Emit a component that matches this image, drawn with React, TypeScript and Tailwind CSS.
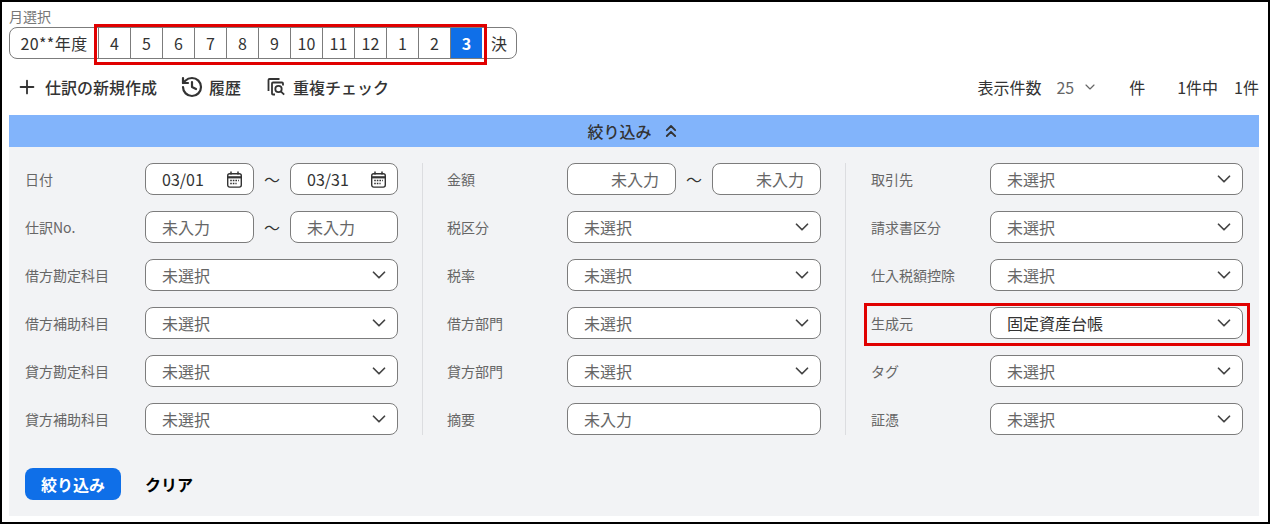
import { ChevronDown, ChevronsUp, History, Plus } from "lucide-react";

const months = [4, 5, 6, 7, 8, 9, 10, 11, 12, 1, 2, 3];

function CalendarIcon() {
  return (
    <svg viewBox="0 0 17 17" className="w-[17px] h-[17px] text-[#333]" fill="none" stroke="currentColor">
      <rect x="1.7" y="2.7" width="13.6" height="13.4" rx="2" strokeWidth="1.4" />
      <path d="M1.7 6.3h13.6" strokeWidth="2.2" />
      <path d="M5 0.6v3M12 0.6v3" strokeWidth="1.5" />
      <path d="M4.2 9.4h8.6M4.2 12.6h6.4" strokeWidth="1.5" strokeDasharray="1.6 1" />
    </svg>
  );
}

function DuplicateIcon() {
  return (
    <svg viewBox="0 0 20 20" className="w-5 h-5 text-[#333]" fill="none" stroke="currentColor" strokeWidth="1.8">
      <path d="M2.5 14V3A1 1 0 0 1 3.5 2h10" />
      <path d="M9 17.5H7a1 1 0 0 1-1-1V6.5a1 1 0 0 1 1-1h9a1 1 0 0 1 1 1V8.5" />
      <circle cx="12.5" cy="12" r="3.2" />
      <path d="M14.8 14.3l3.4 3.4" />
    </svg>
  );
}

function Box({ children, width, right }: { children: React.ReactNode; width: string; right?: boolean }) {
  return (
    <div
      className={`${width} h-8 shrink-0 flex items-center ${right ? "justify-end" : "justify-between"} pl-[16px] pr-[10px] bg-white border border-[#7c7c7c] rounded-lg text-base`}
    >
      {children}
    </div>
  );
}

function Select({ value = "未選択", width = "w-[253px]" }: { value?: string; width?: string }) {
  return (
    <div className={`${width} h-8 shrink-0 flex items-center justify-between pl-[16px] pr-[7px] bg-white border border-[#7c7c7c] rounded-lg text-base`}>
      <span className={value === "未選択" ? "text-[#666]" : "text-[#333]"}>{value}</span>
      <ChevronDown className="w-[22px] h-[22px] text-[#444]" strokeWidth={1.9} />
    </div>
  );
}

function TextBox({ text, right, width = "w-[109px]" }: { text: string; right?: boolean; width?: string }) {
  return (
    <Box width={width} right={right}>
      <span className={`text-[#666] ${right ? "pr-[6px]" : ""}`}>{text}</span>
    </Box>
  );
}

function DateBox({ text, width = "w-[109px]" }: { text: string; width?: string }) {
  return (
    <Box width={width}>
      <span className="text-[#333]">{text}</span>
      <CalendarIcon />
    </Box>
  );
}

function Tilde() {
  return <div className="w-9 text-center text-base text-[#333]">〜</div>;
}

function Row({ label, children, labelWidth = "w-[120px]" }: { label: string; children: React.ReactNode; labelWidth?: string }) {
  return (
    <div className="flex items-center h-8">
      <div className={`${labelWidth} shrink-0 text-sm text-[#666]`}>{label}</div>
      <div className="flex items-center">{children}</div>
    </div>
  );
}

export default function App() {
  return (
    <div
      className="relative w-[1270px] h-[524px] overflow-hidden bg-white border-2 border-black text-[#333]"
      style={{ fontFamily: '"Noto Sans CJK JP", "Noto Sans", sans-serif' }}
    >
      <div className="pl-[7px] pr-[9px]">
        {/* 月選択 */}
        <div className="text-sm text-[#777] leading-4 pt-[6px] h-[25px]">月選択</div>
        <div className="flex items-stretch w-[508px] h-8 bg-white border border-[#7c7c7c] rounded-lg text-base">
          <div className="w-[88px] flex items-center justify-center shrink-0 tracking-[0.4px]">20**年度</div>
          {months.map((m, i) => (
            <div
              key={i}
              className={`w-8 flex items-center justify-center shrink-0 border-l border-[#7c7c7c] ${
                m === 3 ? "bg-[#0f6fe8] text-white font-bold" : ""
              }`}
            >
              {m}
            </div>
          ))}
          <div className="flex-1 flex items-center justify-center">決</div>
        </div>

        {/* ツールバー */}
        <div className="flex items-center justify-between h-[29px] mt-[13px]">
          <div className="flex items-center font-medium text-base">
            <Plus className="w-[22px] h-[22px] ml-[7px] mr-[7px] text-[#333]" strokeWidth={2} />
            <span>仕訳の新規作成</span>
            <History className="w-6 h-6 ml-[23px] mr-[5px] text-[#333]" strokeWidth={2.2} />
            <span>履歴</span>
            <span className="ml-[25px] mr-[7px]">
              <DuplicateIcon />
            </span>
            <span>重複チェック</span>
          </div>
          <div className="flex items-center text-base text-[#333]">
            <span>表示件数</span>
            <span className="ml-[15px] text-[#666]">25</span>
            <ChevronDown className="w-4 h-4 ml-2 text-[#666]" strokeWidth={1.75} />
            <span className="ml-[31px]">件</span>
            <span className="ml-8">1件中</span>
            <span className="ml-4">1件</span>
          </div>
        </div>

        {/* 絞り込み */}
        <div className="mt-[14px] h-8 bg-[#82b4fb] flex items-center justify-center gap-[9px] font-medium text-base text-[#333]">
          <span>絞り込み</span>
          <ChevronsUp className="w-5 h-5" strokeWidth={2.25} />
        </div>

        <div className="h-[369px] bg-[#f2f3f5] pt-[16px] pl-[16px]">
          <div className="flex">
            <div className="flex flex-col gap-4 w-[373px] shrink-0">
              <Row label="日付">
                <DateBox text="03/01" />
                <Tilde />
                <DateBox text="03/31" width="w-[108px]" />
              </Row>
              <Row label="仕訳No.">
                <TextBox text="未入力" />
                <Tilde />
                <TextBox text="未入力" width="w-[108px]" />
              </Row>
              <Row label="借方勘定科目"><Select /></Row>
              <Row label="借方補助科目"><Select /></Row>
              <Row label="貸方勘定科目"><Select /></Row>
              <Row label="貸方補助科目"><Select /></Row>
            </div>
            <div className="w-px bg-[#dcdde0] mx-6 shrink-0" />
            <div className="flex flex-col gap-4 w-[374px] shrink-0">
              <Row label="金額">
                <TextBox text="未入力" right />
                <Tilde />
                <TextBox text="未入力" right />
              </Row>
              <Row label="税区分"><Select width="w-[254px]" /></Row>
              <Row label="税率"><Select width="w-[254px]" /></Row>
              <Row label="借方部門"><Select width="w-[254px]" /></Row>
              <Row label="貸方部門"><Select width="w-[254px]" /></Row>
              <Row label="摘要">
                <div className="w-[254px] h-8 flex items-center pl-[16px] bg-white border border-[#7c7c7c] rounded-lg text-base text-[#666]">
                  未入力
                </div>
              </Row>
            </div>
            <div className="w-px bg-[#dcdde0] ml-[24px] mr-[25px] shrink-0" />
            <div className="flex flex-col gap-4 shrink-0">
              <Row label="取引先" labelWidth="w-[119px]"><Select /></Row>
              <Row label="請求書区分" labelWidth="w-[119px]"><Select /></Row>
              <Row label="仕入税額控除" labelWidth="w-[119px]"><Select /></Row>
              <Row label="生成元" labelWidth="w-[119px]"><Select value="固定資産台帳" /></Row>
              <Row label="タグ" labelWidth="w-[119px]"><Select /></Row>
              <Row label="証憑" labelWidth="w-[119px]"><Select /></Row>
            </div>
          </div>

          <div className="flex items-center mt-[33px]">
            <div className="w-24 h-8 flex items-center justify-center bg-[#0f6fe8] text-white font-bold text-base rounded-lg">
              絞り込み
            </div>
            <div className="ml-6 font-bold text-base text-black">クリア</div>
          </div>
        </div>
      </div>

      {/* 赤枠の注釈 */}
      <div className="absolute left-[92px] top-[22px] w-[393px] h-[41px] border-[3px] border-[#e00000]" />
      <div className="absolute left-[862px] top-[301px] w-[386px] h-[43px] border-[3px] border-[#e00000]" />
    </div>
  );
}
